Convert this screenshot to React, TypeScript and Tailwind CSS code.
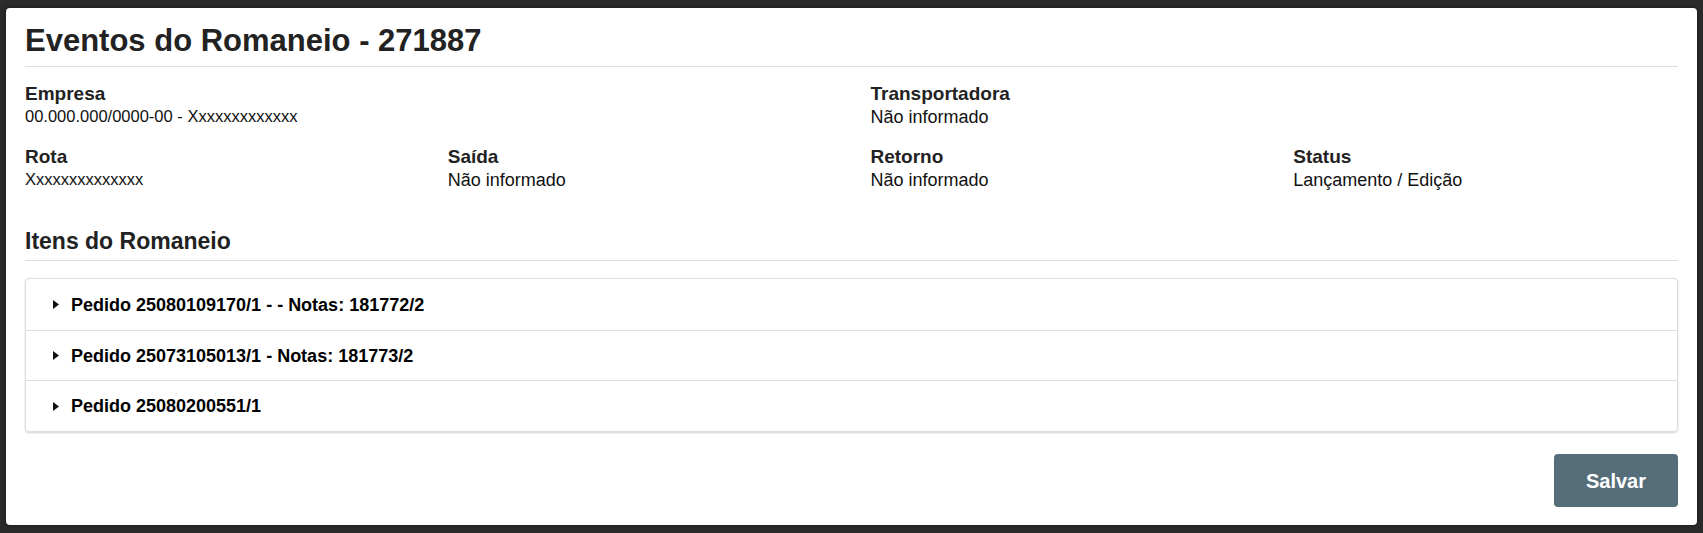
import React from "react";

function Caret() {
  return (
    <svg width="6" height="9" viewBox="0 0 6 9" className="shrink-0">
      <path d="M0 0 L6 4.5 L0 9 Z" fill="#111" />
    </svg>
  );
}

function Field({ label, value, small }: { label: string; value: string; small?: boolean }) {
  return (
    <div className="px-[19px]">
      <div className="text-[19px] font-bold leading-[23px] text-[#222]">{label}</div>
      <div className={small ? "text-[16.5px] leading-[23px] text-[#111]" : "text-[18px] leading-[25px] text-[#111]"}>{value}</div>
    </div>
  );
}

const rows = [
  { text: "Pedido 25080109170/1 - - Notas: 181772/2", h: "h-[51px]" },
  { text: "Pedido 25073105013/1 - Notas: 181773/2", h: "h-[50px]" },
  { text: "Pedido 25080200551/1", h: "h-[51px]" },
];

export default function App() {
  return (
    <div
      className="min-h-[533px] bg-[#2b2b2b] px-[6px] pb-[6px] pt-[8px]"
      style={{ fontFamily: '"Liberation Sans", Arial, sans-serif' }}
    >
      <div className="rounded-[4px] bg-white pb-[18px] pt-[15px] shadow-[0_0_4px_rgba(0,0,0,0.5)]">
        <div className="px-[19px]">
          <h1 className="border-b border-[#dedede] pb-[7px] text-[31px] font-bold leading-[36px] text-[#222]">
            Eventos do Romaneio - 271887
          </h1>
        </div>

        <div className="mt-[15px] grid grid-cols-2">
          <Field label="Empresa" value="00.000.000/0000-00 - Xxxxxxxxxxxxx" small />
          <Field label="Transportadora" value="Não informado" />
        </div>

        <div className="mt-[15px] grid grid-cols-4">
          <Field label="Rota" value="Xxxxxxxxxxxxxx" small />
          <Field label="Saída" value="Não informado" />
          <Field label="Retorno" value="Não informado" />
          <Field label="Status" value="Lançamento / Edição" />
        </div>

        <div className="mt-[34px] px-[19px]">
          <h2 className="border-b border-[#dedede] pb-[5px] text-[23px] font-bold leading-[28px] text-[#222]">
            Itens do Romaneio
          </h2>
        </div>

        <div className="mx-[19px] mt-[17px] rounded-[4px] border border-[#dcdcdc] shadow-[0_1px_2px_rgba(0,0,0,0.18)]">
          {rows.map((r, i) => (
            <div
              key={i}
              className={`flex items-center gap-[12px] pl-[27px] ${r.h} ${i > 0 ? "border-t border-[#dedede]" : ""}`}
            >
              <Caret />
              <span className="text-[18px] font-bold leading-[22px] text-black">{r.text}</span>
            </div>
          ))}
        </div>

        <div className="mt-[22px] flex justify-end px-[19px]">
          <button className="h-[53px] w-[124px] rounded-[4px] bg-[#566e7a] text-[20px] font-bold text-white">
            Salvar
          </button>
        </div>
      </div>
    </div>
  );
}
